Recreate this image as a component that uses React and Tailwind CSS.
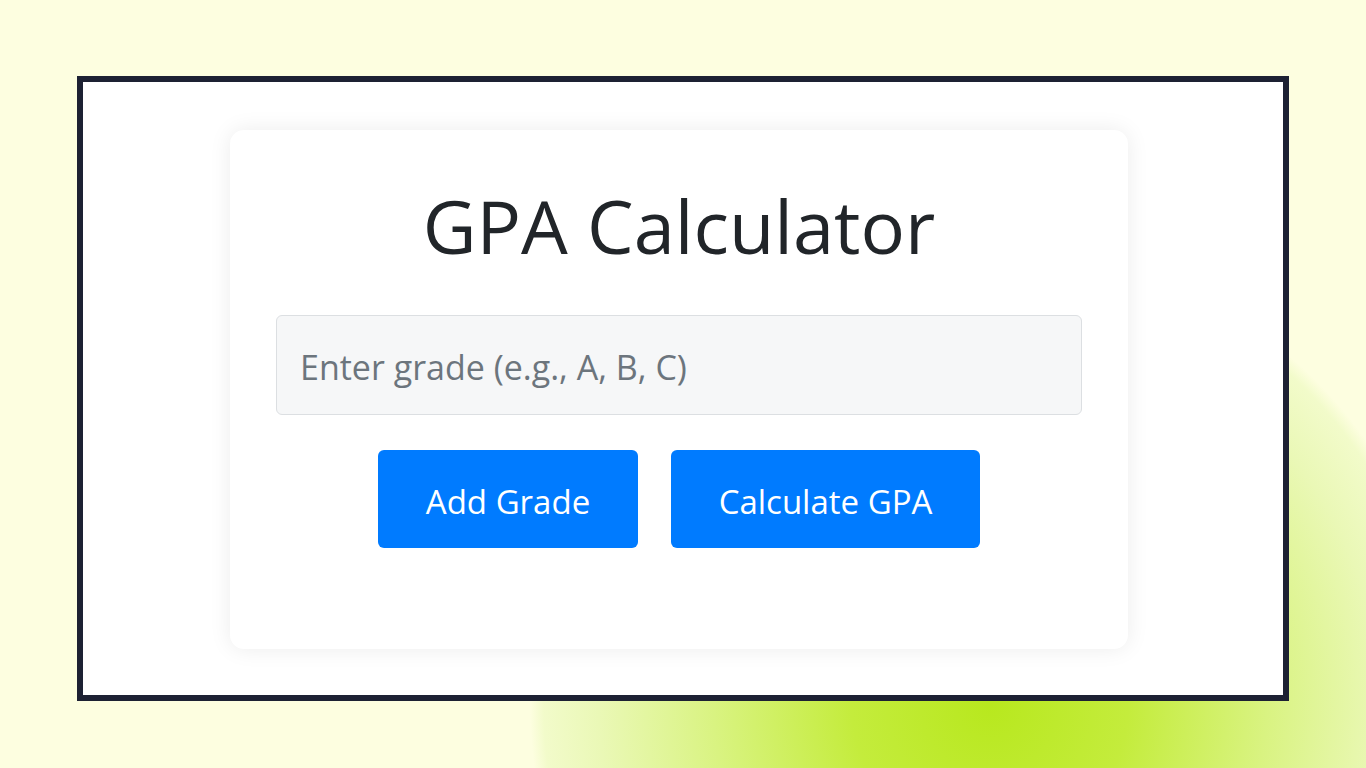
import React, { useState } from "react";

const App = () => {
  const [grade, setGrade] = useState("");

  return (
    <div
      className="w-full h-[768px] overflow-hidden pt-[76px] pl-[77px] bg-[#fdfee0] bg-[radial-gradient(circle_460px_at_990px_705px,#b8e81e_0%,#c4ec3c_30%,#d9f381_60%,#eaf8b6_85%,#f2fbca_97%,rgba(253,254,224,0)_100%)]"
      style={{ fontFamily: '"Open Sans", "Noto Sans", sans-serif' }}
    >
      <div className="w-[1212px] h-[625px] border-[6px] border-[#1d2133] bg-white">
        <div className="mt-[48px] ml-[147px] w-[898px] h-[519px] rounded-[14px] bg-white shadow-[0_0_22px_rgba(0,0,0,0.08)] flex flex-col items-center">
          <h1 className="mt-[46px] text-[74px] leading-[100px] font-normal text-[#212529]">
            GPA Calculator
          </h1>
          <input
            type="text"
            value={grade}
            onChange={(e) => setGrade(e.target.value)}
            placeholder="Enter grade (e.g., A, B, C)"
            className="mt-[39px] w-[806px] h-[100px] px-[23px] pt-[4px] rounded-[6px] border border-[#dcdfe2] bg-[#f6f7f8] text-[34px] text-[#495057] placeholder:text-[#6c757d] outline-none"
          />
          <div className="mt-[35px] flex gap-[33px]">
            <button className="w-[260px] h-[98px] pt-[5px] rounded-[6px] bg-[#007bff] text-white text-[33px]">
              Add Grade
            </button>
            <button className="w-[309px] h-[98px] pt-[5px] rounded-[6px] bg-[#007bff] text-white text-[33px]">
              Calculate GPA
            </button>
          </div>
        </div>
      </div>
    </div>
  );
};

export default App;
